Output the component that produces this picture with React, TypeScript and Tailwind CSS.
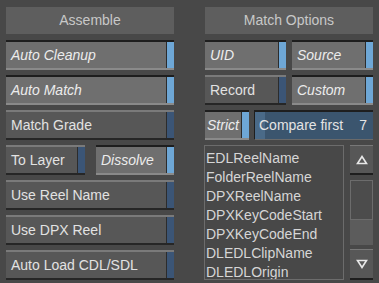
import React from "react"

const font = { fontFamily: '"Liberation Sans", Arial, sans-serif' }

function Toggle({ label, on, className = "", pad = "pl-[5px]" }: { label: string; on?: boolean; className?: string; pad?: string }) {
  if (on) {
    return (
      <div className={`flex h-[30px] border-t-2 border-b-2 border-t-[#1e1e1e] border-b-[#8a8a8a] bg-[#6f6f6f] ${className}`}>
        <div className={`flex flex-1 items-center ${pad} text-[14px] italic text-[#ececec] overflow-hidden whitespace-nowrap`}>{label}</div>
        <div className="w-px bg-[#2c2c2c]" />
        <div className="w-[7px] bg-[#6ea7d6]" />
      </div>
    )
  }
  return (
    <div className={`flex h-[30px] border-t-2 border-b-2 border-t-[#7a7a7a] border-b-[#262626] bg-[#575757] ${className}`}>
      <div className={`flex flex-1 items-center ${pad} text-[14px] text-[#e2e2e2] overflow-hidden whitespace-nowrap`}>{label}</div>
      <div className="w-px bg-[#2c2c2c]" />
      <div className="w-[7px] bg-[#3b5576]" />
    </div>
  )
}

function Header({ title }: { title: string }) {
  return (
    <div className="flex h-[27px] items-center justify-center bg-[#5e5e5e] text-[14px] text-[#c8c8c8]">{title}</div>
  )
}

function Arrow({ up }: { up?: boolean }) {
  return (
    <svg width="12" height="10" viewBox="0 0 12 10">
      <polygon
        points={up ? "6,1.5 10.5,8.5 1.5,8.5" : "1.5,1.5 10.5,1.5 6,8.5"}
        fill="none"
        stroke="#e8e8e8"
        strokeWidth="1.6"
      />
    </svg>
  )
}

const items = ["EDLReelName", "FolderReelName", "DPXReelName", "DPXKeyCodeStart", "DPXKeyCodeEnd", "DLEDLClipName", "DLEDLOrigin"]

export default function App() {
  return (
    <div className="flex h-[283px] w-[379px] gap-[31px] bg-[#484848] pl-[6px] pt-[7px]" style={font}>
      <div className="flex w-[168px] flex-col">
        <Header title="Assemble" />
        <div className="mt-[6px] flex flex-col gap-[5px]">
          <Toggle label="Auto Cleanup" on />
          <Toggle label="Auto Match" on />
          <Toggle label="Match Grade" />
          <div className="flex gap-[11px]">
            <Toggle label="To Layer" className="w-[79px]" />
            <Toggle label="Dissolve" on className="flex-1" />
          </div>
          <Toggle label="Use Reel Name" />
          <Toggle label="Use DPX Reel" />
          <Toggle label="Auto Load CDL/SDL" />
        </div>
      </div>
      <div className="flex w-[168px] flex-col">
        <Header title="Match Options" />
        <div className="mt-[6px] flex flex-col gap-[5px]">
          <div className="flex gap-[6px]">
            <Toggle label="UID" on className="flex-1" />
            <Toggle label="Source" on className="flex-1" />
          </div>
          <div className="flex gap-[6px]">
            <Toggle label="Record" className="flex-1" />
            <Toggle label="Custom" on className="flex-1" />
          </div>
          <div className="flex gap-[5px]">
            <Toggle label="Strict" on pad="pl-[2px]" className="w-[44px]" />
            <div className="flex h-[30px] flex-1 items-center justify-between border-t-2 border-l border-b border-t-[#1e1e1e] border-l-[#1e1e1e] border-b-[#6a6a6a] bg-[linear-gradient(to_right,#4a6a88_10px,#3b556e_10px)] pl-[4px] pr-[6px] text-[14px] text-[#e4e4e4]">
              <span>Compare first</span>
              <span>7</span>
            </div>
          </div>
          <div className="flex gap-[6px]">
            <div className="ml-[-1px] flex h-[135px] w-[140px] flex-col border border-[#6c6c6c] pl-[1px] pt-[3px] text-[14px] leading-[19px] text-[#d6d6d6] overflow-hidden">
              {items.map((s) => (
                <div key={s}>{s}</div>
              ))}
            </div>
            <div className="flex w-[23px] flex-col">
              <div className="flex h-[28px] items-center justify-center border-t border-t-[#787878] bg-[#575757]">
                <Arrow up />
              </div>
              <div className="h-[2px] bg-[#1e1e1e]" />
              <div className="mt-[5px] flex h-[65px] flex-col bg-[#5c5c5c]">
                <div className="h-[40px] border border-[#6c6c6c] bg-[#4c4c4c]" />
              </div>
              <div className="mt-[4px] flex h-[29px] items-center justify-center border-t border-t-[#787878] bg-[#575757]">
                <Arrow />
              </div>
              <div className="h-[2px] bg-[#1e1e1e]" />
            </div>
          </div>
        </div>
      </div>
    </div>
  )
}
